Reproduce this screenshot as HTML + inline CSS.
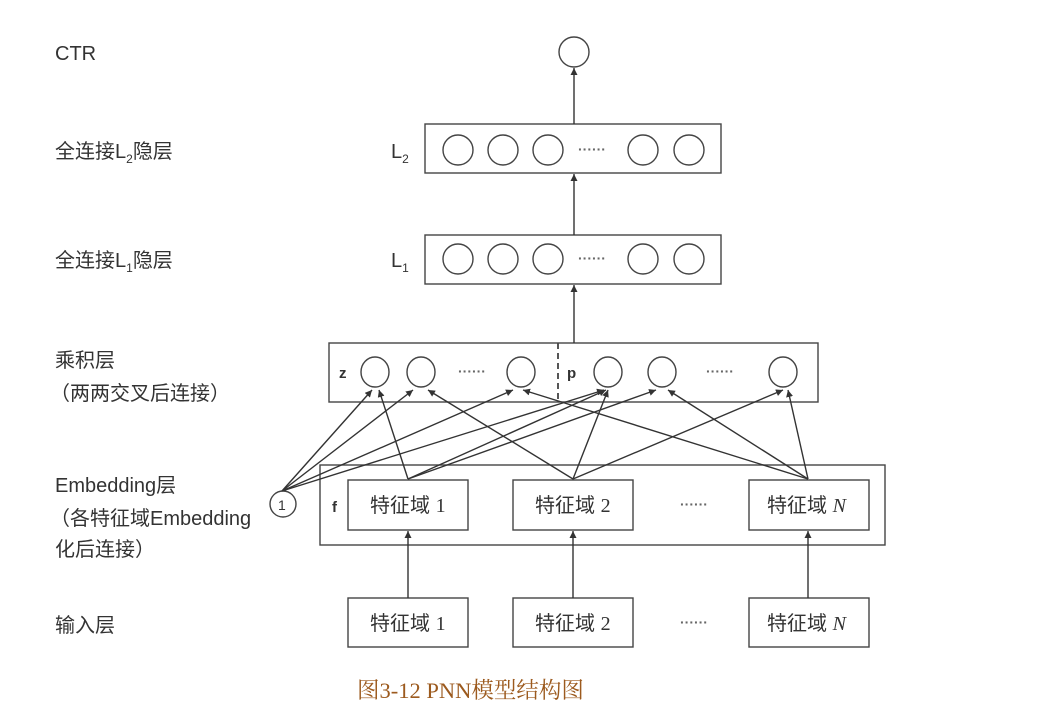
<!DOCTYPE html>
<html><head><meta charset="utf-8"><style>
html,body{margin:0;padding:0;background:#fff;width:1038px;height:720px;overflow:hidden}
svg text{font-family:"Liberation Sans","Noto Sans CJK SC",sans-serif;fill:#333}
</style></head><body>
<svg width="1038" height="720" viewBox="0 0 1038 720" xmlns="http://www.w3.org/2000/svg">
<defs><marker id="a" viewBox="0 0 10 10" refX="10" refY="5" markerWidth="7" markerHeight="7" orient="auto-start-reverse" markerUnits="userSpaceOnUse"><path d="M0,0L10,5L0,10z" fill="#333"/></marker></defs>
<g stroke="#444" stroke-width="1.4" fill="none">
<circle cx="574" cy="52" r="15"/>
<rect x="425" y="124" width="296" height="49"/>
<rect x="425" y="235" width="296" height="49"/>
<rect x="329" y="343" width="489" height="59"/>
<rect x="320" y="465" width="565" height="80"/>
<rect x="348" y="480" width="120" height="50"/>
<rect x="513" y="480" width="120" height="50"/>
<rect x="749" y="480" width="120" height="50"/>
<rect x="348" y="598" width="120" height="49"/>
<rect x="513" y="598" width="120" height="49"/>
<rect x="749" y="598" width="120" height="49"/>
<g>
<circle cx="458" cy="150" r="15"/><circle cx="503" cy="150" r="15"/><circle cx="548" cy="150" r="15"/><circle cx="643" cy="150" r="15"/><circle cx="689" cy="150" r="15"/>
<circle cx="458" cy="259" r="15"/><circle cx="503" cy="259" r="15"/><circle cx="548" cy="259" r="15"/><circle cx="643" cy="259" r="15"/><circle cx="689" cy="259" r="15"/>
</g>
<ellipse cx="375" cy="372" rx="14" ry="15"/><ellipse cx="421" cy="372" rx="14" ry="15"/><ellipse cx="521" cy="372" rx="14" ry="15"/>
<ellipse cx="608" cy="372" rx="14" ry="15"/><ellipse cx="662" cy="372" rx="14" ry="15"/><ellipse cx="783" cy="372" rx="14" ry="15"/>
<line x1="558" y1="343" x2="558" y2="402" stroke-dasharray="6,4" stroke-width="1.8"/>
<circle cx="283" cy="504" r="13"/>
</g>
<g stroke="#333" stroke-width="1.4" marker-end="url(#a)">
<line x1="574" y1="124" x2="574" y2="68"/>
<line x1="574" y1="235" x2="574" y2="174"/>
<line x1="574" y1="343" x2="574" y2="285"/>
<line x1="408" y1="598" x2="408" y2="531"/>
<line x1="573" y1="598" x2="573" y2="531"/>
<line x1="808" y1="598" x2="808" y2="531"/>
<line x1="282" y1="491" x2="372" y2="390"/>
<line x1="282" y1="491" x2="413" y2="390"/>
<line x1="282" y1="491" x2="513" y2="390"/>
<line x1="282" y1="491" x2="604" y2="390"/>
<line x1="408" y1="479" x2="379" y2="390"/>
<line x1="408" y1="479" x2="606" y2="390"/>
<line x1="408" y1="479" x2="656" y2="390"/>
<line x1="573" y1="479" x2="428" y2="390"/>
<line x1="573" y1="479" x2="608" y2="390"/>
<line x1="573" y1="479" x2="783" y2="390"/>
<line x1="808" y1="479" x2="523" y2="390"/>
<line x1="808" y1="479" x2="668" y2="390"/>
<line x1="808" y1="479" x2="788" y2="390"/>
</g>
<g font-size="20">
<text x="55" y="60">CTR</text>
<text x="55" y="158">全连接L<tspan font-size="12" dy="5">2</tspan><tspan dy="-5">隐层</tspan></text>
<text x="55" y="267">全连接L<tspan font-size="12" dy="5">1</tspan><tspan dy="-5">隐层</tspan></text>
<text x="55" y="367">乘积层</text>
<text x="50" y="400">（两两交叉后连接）</text>
<text x="55" y="492">Embedding层</text>
<text x="50" y="525">（各特征域Embedding</text>
<text x="55" y="556">化后连接）</text>
<text x="55" y="632">输入层</text>
<text x="391" y="158">L<tspan font-size="12" dy="5">2</tspan></text>
<text x="391" y="267">L<tspan font-size="12" dy="5">1</tspan></text>
</g>
<g font-size="15" font-weight="bold">
<text x="339" y="378">z</text><text x="567" y="378">p</text><text x="332" y="512">f</text>
</g>
<text x="278" y="510" font-size="14">1</text>
<g font-size="20">
<text x="370" y="512">特征域 <tspan font-family="Liberation Serif">1</tspan></text><text x="535" y="512">特征域 <tspan font-family="Liberation Serif">2</tspan></text><text x="767" y="512">特征域 <tspan font-style="italic" font-family="Liberation Serif">N</tspan></text>
<text x="370" y="630">特征域 <tspan font-family="Liberation Serif">1</tspan></text><text x="535" y="630">特征域 <tspan font-family="Liberation Serif">2</tspan></text><text x="767" y="630">特征域 <tspan font-style="italic" font-family="Liberation Serif">N</tspan></text>
</g>
<g font-size="14" font-weight="bold" style="fill:#666">
<text x="578" y="154" style="fill:#666">······</text><text x="578" y="263" style="fill:#666">······</text>
<text x="458" y="376" style="fill:#666">······</text><text x="706" y="376" style="fill:#666">······</text>
<text x="680" y="509" style="fill:#666">······</text><text x="680" y="627" style="fill:#666">······</text>
</g>
<text x="357" y="698" font-size="22.5" style="font-family:'Liberation Serif','Noto Serif CJK SC',serif;fill:#9c5a1e">图3-12 PNN模型结构图</text>
</svg>
</body></html>
